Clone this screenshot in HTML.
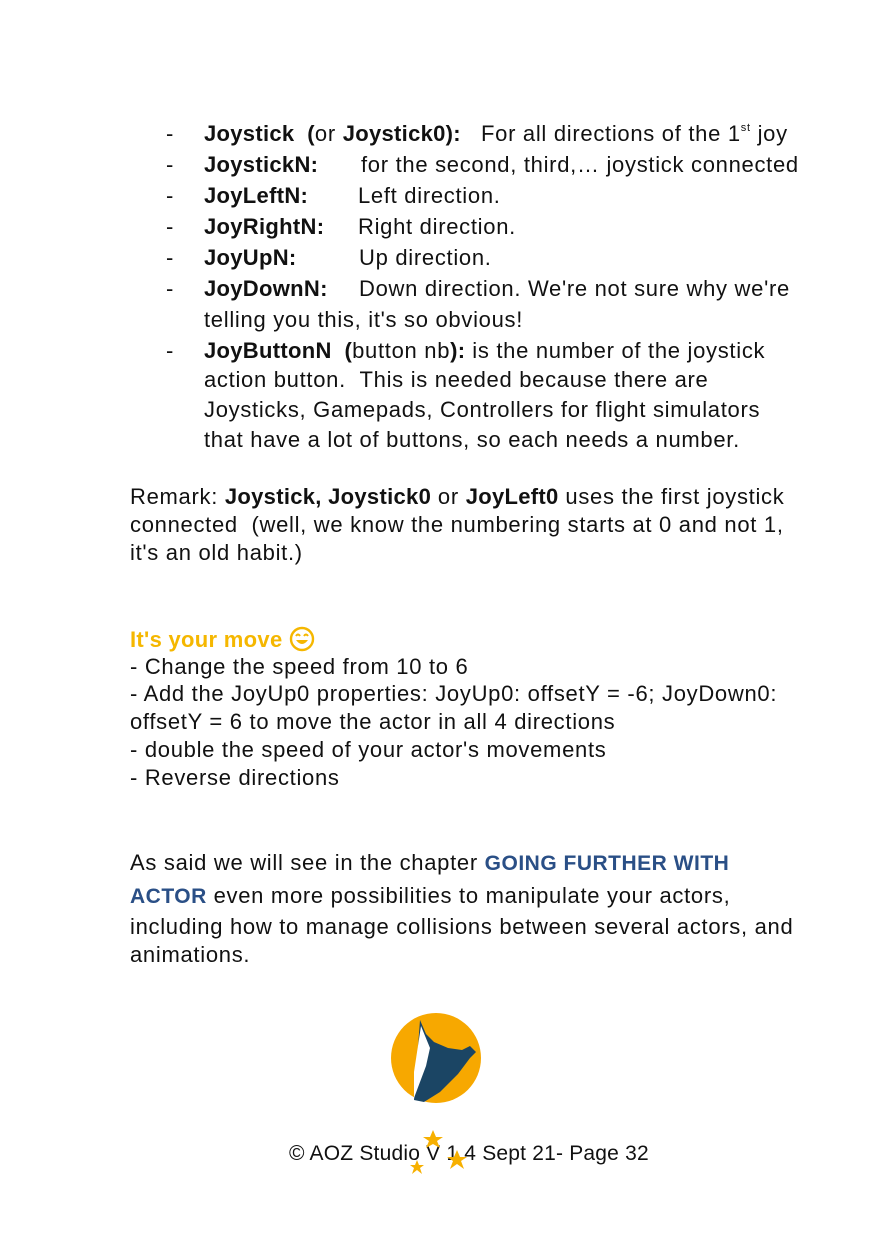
<!DOCTYPE html>
<html><head><meta charset="utf-8"><style>
body{margin:0;background:#fff;}
#p{position:relative;width:873px;height:1240px;overflow:hidden;font-family:"Liberation Sans",sans-serif;font-size:22px;letter-spacing:0.7px;color:#111;}
.l{position:absolute;white-space:nowrap;line-height:26px;}
b{font-weight:bold;letter-spacing:0.3px}
.y{color:#f5b700;font-weight:bold;letter-spacing:0.3px}
.bl{color:#2a4f86;font-weight:bold;font-size:21px;letter-spacing:0.5px}
sup{font-size:11px;vertical-align:top;line-height:14px}
</style></head><body><div id="p">
<div class="l" style="left:166px;top:121px">-</div><div class="l" style="left:204px;top:121px"><b>Joystick &nbsp;(</b>or <b>Joystick0):</b></div><div class="l" style="left:481px;top:121px">For all directions of the 1<sup>st</sup> joy</div>
<div class="l" style="left:166px;top:152px">-</div><div class="l" style="left:204px;top:152px"><b>JoystickN:</b></div><div class="l" style="left:361px;top:152px">for the second, third,… joystick connected</div>
<div class="l" style="left:166px;top:183px">-</div><div class="l" style="left:204px;top:183px"><b>JoyLeftN:</b></div><div class="l" style="left:358px;top:183px">Left direction.</div>
<div class="l" style="left:166px;top:214px">-</div><div class="l" style="left:204px;top:214px"><b>JoyRightN:</b></div><div class="l" style="left:358px;top:214px">Right direction.</div>
<div class="l" style="left:166px;top:245px">-</div><div class="l" style="left:204px;top:245px"><b>JoyUpN:</b></div><div class="l" style="left:359px;top:245px">Up direction.</div>
<div class="l" style="left:166px;top:276px">-</div><div class="l" style="left:204px;top:276px"><b>JoyDownN:</b></div><div class="l" style="left:359px;top:276px">Down direction. We're not sure why we're</div>
<div class="l" style="left:204px;top:307px">telling you this, it's so obvious!</div>
<div class="l" style="left:166px;top:338px">-</div><div class="l" style="left:204px;top:338px"><b>JoyButtonN &nbsp;(</b>button nb<b>):</b> is the number of the joystick</div>
<div class="l" style="left:204px;top:367px">action button. &nbsp;This is needed because there are</div>
<div class="l" style="left:204px;top:397px">Joysticks, Gamepads, Controllers for flight simulators</div>
<div class="l" style="left:204px;top:427px">that have a lot of buttons, so each needs a number.</div>

<div class="l" style="left:130px;top:484px">Remark: <b>Joystick, Joystick0</b> or <b>JoyLeft0</b> uses the first joystick</div>
<div class="l" style="left:130px;top:512px">connected &nbsp;(well, we know the numbering starts at 0 and not 1,</div>
<div class="l" style="left:130px;top:540px">it's an old habit.)</div>

<div class="l y" style="left:130px;top:626px">It's your move <svg width="26" height="26" viewBox="0 0 26 26" style="vertical-align:-5px"><circle cx="13" cy="13" r="11" fill="none" stroke="#f5b700" stroke-width="2.4"/><path d="M7 10 Q9 7 11 10 M15 10 Q17 7 19 10" fill="none" stroke="#f5b700" stroke-width="2"/><path d="M7 14 Q13 22 19 14 Z" fill="#f5b700"/></svg></div>
<div class="l" style="left:130px;top:654px">- Change the speed from 10 to 6</div>
<div class="l" style="left:130px;top:681px">- Add the JoyUp0 properties: JoyUp0: offsetY = -6; JoyDown0:</div>
<div class="l" style="left:130px;top:709px">offsetY = 6 to move the actor in all 4 directions</div>
<div class="l" style="left:130px;top:737px">- double the speed of your actor's movements</div>
<div class="l" style="left:130px;top:765px">- Reverse directions</div>

<div class="l" style="left:130px;top:850px">As said we will see in the chapter <span class="bl">GOING FURTHER WITH</span></div>
<div class="l" style="left:130px;top:883px"><span class="bl">ACTOR</span> even more possibilities to manipulate your actors,</div>
<div class="l" style="left:130px;top:914px">including how to manage collisions between several actors, and</div>
<div class="l" style="left:130px;top:942px">animations.</div>

<svg style="position:absolute;left:390px;top:1012px" width="92" height="92" viewBox="0 0 92 92">
<circle cx="46" cy="46" r="45" fill="#f7a800"/>
<path d="M30 8 L36 22 L44 30 L58 36 L72 38 L80 34 L86 40 L80 46 L68 62 L50 80 L34 90 L24 88 Z" fill="#1b4564"/>
<path d="M31 14 L40 36 L36 54 L24 86 L24 60 Z" fill="#fff"/>
</svg>
<div class="l" style="left:289px;top:1141px;font-size:21px;letter-spacing:0.2px">© AOZ Studio V 1.4 Sept 21- Page 32</div>
<svg style="position:absolute;left:405px;top:1128px" width="70" height="50" viewBox="0 0 70 50">
<g fill="#f7b000">
<polygon points="28,2 31,9 38,9 32,13 35,20 28,16 21,20 24,13 18,9 25,9"/>
<polygon points="52,22 55,29 62,29 56,33 59,41 52,36 45,41 48,33 42,29 49,29"/>
<polygon points="12,32 14,37 19,37 15,40 17,46 12,42 7,46 9,40 5,37 10,37"/>
</g></svg>
</div></body></html>
